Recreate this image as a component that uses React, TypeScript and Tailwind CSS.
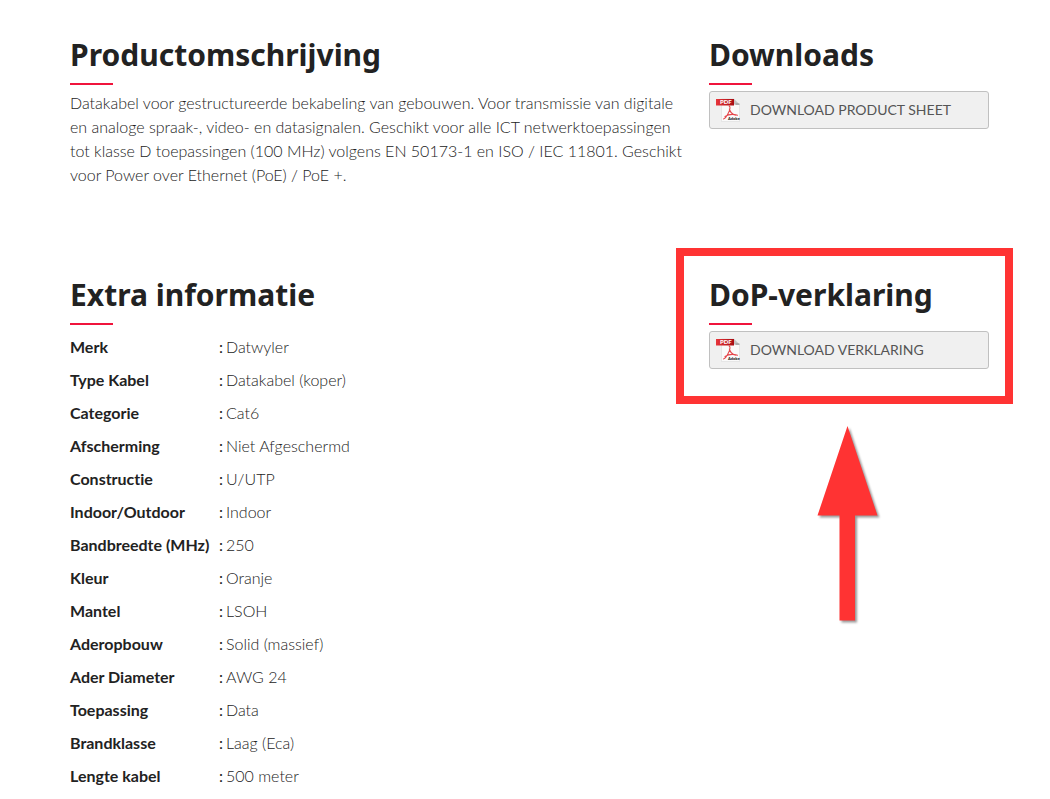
import React from 'react';

const specs = [
    { label: 'Merk', value: 'Datwyler' },
    { label: 'Type Kabel', value: 'Datakabel (koper)' },
    { label: 'Categorie', value: 'Cat6' },
    { label: 'Afscherming', value: 'Niet Afgeschermd' },
    { label: 'Constructie', value: 'U/UTP' },
    { label: 'Indoor/Outdoor', value: 'Indoor' },
    { label: 'Bandbreedte (MHz)', value: '250' },
    { label: 'Kleur', value: 'Oranje' },
    { label: 'Mantel', value: 'LSOH' },
    { label: 'Aderopbouw', value: 'Solid (massief)' },
    { label: 'Ader Diameter', value: 'AWG 24' },
    { label: 'Toepassing', value: 'Data' },
    { label: 'Brandklasse', value: 'Laag (Eca)' },
    { label: 'Lengte kabel', value: '500 meter' },
];

function SectionTitle({ children }: { children: React.ReactNode }) {
    return (
        <div className="mb-[6px]">
            <h2 className="font-['Noto_Sans',sans-serif] text-3xl leading-10 font-bold text-[#222]">{children}</h2>
            <div className="mt-2 h-[2px] w-[43px] bg-[#f0143c]" />
        </div>
    );
}

function PdfIcon() {
    return (
        <svg width="24" height="24" viewBox="0 0 24 24" className="shrink-0" aria-hidden="true">
            <defs>
                <linearGradient id="pdf-band" x1="0" y1="0" x2="1" y2="0">
                    <stop offset="0" stopColor="#e8353a" />
                    <stop offset="1" stopColor="#a80d12" />
                </linearGradient>
            </defs>
            <path d="M5.500 1H18l5.500 5.500V23.500h-18z" fill="#fafafa" stroke="#dcdcdc" strokeWidth="0.600" />
            <path d="M18 1v5.500h5.500z" fill="#c4c4c4" />
            <path d="M19.500 5.600h4v1h-4z" fill="#8a8a8a" />
            <path
                d="M13.200 8c1.600 1 .6 4-.6 6.600C11.200 17.600 9.400 20.600 7.500 21M9 18.400c3-1.800 8-2.600 12.500-1.200M13.400 11c.8 2.800 2.800 5.200 6 6.200"
                fill="none"
                stroke="#e5484d"
                strokeWidth="1.100"
                strokeLinecap="round"
            />
            <path d="M0 1h18v6.500H0z" fill="url(#pdf-band)" />
            <text x="4" y="6" fontSize="6" fontWeight="900" fill="#fff" fontFamily="Lato, sans-serif">PDF</text>
            <text x="12" y="22" fontSize="4" fontWeight="900" fill="#222" fontFamily="Lato, sans-serif">Adobe</text>
        </svg>
    );
}

function DownloadLink({ label }: { label: string }) {
    return (
        <a href="#" className="flex h-[38px] items-center gap-[10px] rounded-[3px] border border-[#c0c0c0] bg-[#f0f0f0] px-[6px] text-sm text-[#555]">
            <PdfIcon />
            {label}
        </a>
    );
}

function Arrow() {
    return (
        <svg width="68" height="204" viewBox="0 0 68 204" className="mx-auto mt-[55px] drop-shadow-[2px_2px_1px_rgba(0,0,0,0.4)]" aria-hidden="true">
            <path d="M32.500 2L62.500 91.500H40V196.500H24.500V91.500H2.500z" fill="#ff3333" />
        </svg>
    );
}

export default function App() {
    return (
        <main className="grid grid-cols-[1fr_280px] gap-x-6 gap-y-[88px] bg-white pt-[35px] pr-[61px] pl-[70px] font-['Lato',sans-serif] text-base text-[#222] [font-variant-ligatures:none]">
            <section>
                <SectionTitle>Productomschrijving</SectionTitle>
                <p className="leading-6 font-light">
                    Datakabel voor gestructureerde bekabeling van gebouwen. Voor transmissie van digitale en analoge spraak-, video- en
                    datasignalen. Geschikt voor alle ICT netwerktoepassingen tot klasse D toepassingen (100 MHz) volgens EN 50173-1 en ISO
                    / IEC 11801. Geschikt voor Power over Ethernet (PoE) / PoE +.
                </p>
            </section>

            <section>
                <SectionTitle>Downloads</SectionTitle>
                <DownloadLink label="DOWNLOAD PRODUCT SHEET" />
            </section>

            <section>
                <SectionTitle>Extra informatie</SectionTitle>
                <table className="text-left leading-8">
                    <tbody>
                        {specs.map((spec) => (
                            <tr key={spec.label} className="h-[33px] align-top">
                                <th scope="row" className="w-[149px] p-0 font-bold">{spec.label}</th>
                                <td className="p-0 font-light">
                                    <span className="mr-[3px] font-normal">:</span>
                                    {spec.value}
                                </td>
                            </tr>
                        ))}
                    </tbody>
                </table>
            </section>

            <div>
                <section className="relative">
                    <SectionTitle>DoP-verklaring</SectionTitle>
                    <DownloadLink label="DOWNLOAD VERKLARING" />
                    <div className="pointer-events-none absolute -top-[27px] -right-6 -bottom-[35px] -left-[33px] border-8 border-[#ff3333]" />
                </section>
                <Arrow />
            </div>
        </main>
    );
}
